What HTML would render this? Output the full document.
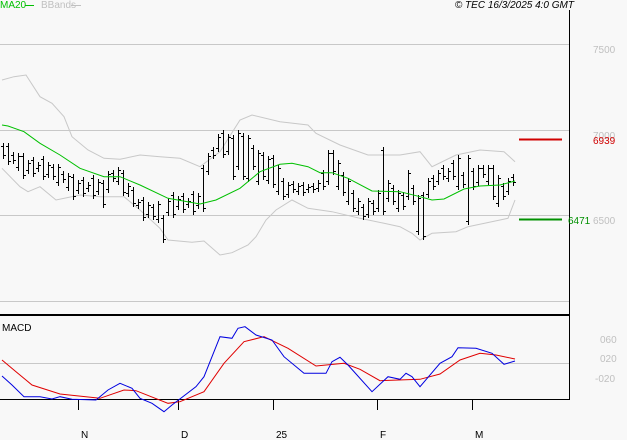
<!DOCTYPE html>
<html><head><meta charset="utf-8">
<style>
html,body{margin:0;padding:0;background:#f8f8f8;width:627px;height:440px;overflow:hidden}
svg{display:block}
text{font-family:"Liberation Sans",sans-serif;font-size:10px}
</style></head><body>
<svg width="627" height="440" viewBox="0 0 627 440" xmlns="http://www.w3.org/2000/svg">
<rect width="627" height="440" fill="#f8f8f8"/>
<g stroke="#c8c8c8" stroke-width="1" shape-rendering="crispEdges">
<line x1="0" y1="44.5" x2="569" y2="44.5"/>
<line x1="0" y1="130.5" x2="569" y2="130.5"/>
<line x1="0" y1="215.5" x2="569" y2="215.5"/>
<line x1="0" y1="301.5" x2="569" y2="301.5"/>
<line x1="0" y1="363.5" x2="569" y2="363.5"/>
</g>
<g shape-rendering="crispEdges">
<line x1="569.5" y1="10" x2="569.5" y2="400" stroke="#000"/>
<line x1="0" y1="315" x2="570" y2="315" stroke="#000" stroke-width="2"/>
<line x1="0" y1="399.5" x2="570" y2="399.5" stroke="#000"/>
<g stroke="#000">
<line x1="78.5" y1="399" x2="78.5" y2="410"/>
<line x1="178.5" y1="399" x2="178.5" y2="410"/>
<line x1="273.5" y1="399" x2="273.5" y2="410"/>
<line x1="377.5" y1="399" x2="377.5" y2="410"/>
<line x1="472.5" y1="399" x2="472.5" y2="410"/>
</g>
</g>
<g fill="#000">
<text x="81" y="438">N</text><text x="181" y="438">D</text><text x="276" y="438">25</text><text x="380" y="438">F</text><text x="475" y="438">M</text>
<text x="2" y="331" font-size="9">MACD</text>
<text x="574" y="8" text-anchor="end" font-style="italic">© TEC 16/3/2025 4:0 GMT</text>
</g>
<text x="0" y="8" fill="#00c000" font-size="9">MA20</text>
<line x1="25" y1="5.5" x2="34" y2="5.5" stroke="#00c000"/>
<text x="41" y="8" fill="#c0c0c0" font-size="9">BBands</text>
<line x1="71" y1="5.5" x2="81" y2="5.5" stroke="#c0c0c0"/>
<g fill="#c0c0c0">
<text x="593" y="53">7500</text>
<text x="593" y="139">7000</text>
<text x="593" y="224">6500</text>
<text x="600" y="343">060</text>
<text x="600" y="362">020</text>
<text x="595" y="382">-020</text>
</g>
<line x1="519" y1="139.5" x2="562" y2="139.5" stroke="#d00000" stroke-width="2"/>
<text x="593" y="144" fill="#d00000">6939</text>
<line x1="519" y1="219.5" x2="562" y2="219.5" stroke="#009000" stroke-width="2"/>
<text x="568" y="224" fill="#009000">6471</text>

<g fill="none" stroke-width="1">
<polyline stroke="#c8c8c8" points="2,80 14,76.7 26,75 40,96.7 52,103.3 64,116.7 72,136.7 88,150 104,158.3 120,159.3 140,155 160,156.7 180,158.3 200,166.7 220,151.7 240,120 252,115 280,121.7 308,125 316,133.3 340,145 368,155 400,155 420,151.7 432,166.7 456,155 480,150 504,151.7 515,161.7"/>
<polyline stroke="#c8c8c8" points="2,168.3 20,186.7 28,191.7 40,186.7 56,200 80,195 100,196.7 124,196.7 140,210 160,228.3 168,240 192,242.3 204,241 220,255 232,252.7 248,245 256,236.7 266,220 276,210 292,200 308,208.3 332,211.7 360,218.3 384,223.3 400,226.7 412,233.3 420,240 432,233.3 456,231.7 468,226.7 500,220 508,218.3 515,200"/>
<path stroke="#000" shape-rendering="crispEdges" d="
M3.5 143V159M1 146.5h2M4 155.5h2
M8.5 143V165M6 146.5h2M9 161.5h2
M13.5 152V164M11 155.5h2M14 160.5h2
M18.5 153V171M16 167.5h2M19 156.5h2
M23.5 153V179M21 156.5h2M24 175.5h2
M28.5 160V174M26 170.5h2M29 163.5h2
M33.5 157V177M31 160.5h2M34 173.5h2
M38.5 162V172M36 168.5h2M39 165.5h2
M43.5 156V180M41 159.5h2M44 176.5h2
M48.5 162V178M46 174.5h2M49 165.5h2
M53.5 164V180M51 167.5h2M54 176.5h2
M58.5 164V186M56 182.5h2M59 167.5h2
M63.5 171V183M61 174.5h2M64 179.5h2
M68.5 173V191M66 187.5h2M69 176.5h2
M73.5 174V200M71 177.5h2M74 196.5h2
M78.5 180V194M76 190.5h2M79 183.5h2
M83.5 177V197M81 180.5h2M84 193.5h2
M88.5 182V192M86 188.5h2M89 185.5h2
M93.5 175V199M91 178.5h2M94 195.5h2
M98.5 179V195M96 191.5h2M99 182.5h2
M103.5 180V208M101 183.5h2M104 204.5h2
M108.5 171V193M106 189.5h2M109 174.5h2
M113.5 170V182M111 173.5h2M114 178.5h2
M118.5 167V185M116 181.5h2M119 170.5h2
M123.5 170V196M121 173.5h2M124 192.5h2
M128.5 183V197M126 193.5h2M129 186.5h2
M133.5 187V207M131 190.5h2M134 203.5h2
M138.5 199V209M136 205.5h2M139 202.5h2
M143.5 197V221M141 200.5h2M144 217.5h2
M148.5 202V218M146 214.5h2M149 205.5h2
M153.5 204V220M151 207.5h2M154 216.5h2
M158.5 201V223M156 219.5h2M159 204.5h2
M163.5 215V243M161 218.5h2M164 239.5h2
M168.5 198V216M166 212.5h2M169 201.5h2
M173.5 192V218M171 195.5h2M174 214.5h2
M178.5 196V210M176 206.5h2M179 199.5h2
M183.5 193V213M181 196.5h2M184 209.5h2
M188.5 198V208M186 204.5h2M189 201.5h2
M193.5 191V215M191 194.5h2M194 211.5h2
M198.5 193V209M196 205.5h2M199 196.5h2
M203.5 165V212M201 168.5h2M204 208.5h2
M208.5 153V175M206 171.5h2M209 156.5h2
M213.5 147V159M211 150.5h2M214 155.5h2
M218.5 134V152M216 148.5h2M219 137.5h2
M223.5 130V158M221 133.5h2M224 154.5h2
M228.5 134V155M226 151.5h2M229 137.5h2
M233.5 135V180M231 138.5h2M234 176.5h2
M238.5 130V170M236 166.5h2M239 133.5h2
M243.5 133V180M241 136.5h2M244 176.5h2
M248.5 135V182M246 178.5h2M249 138.5h2
M253.5 145V170M251 148.5h2M254 166.5h2
M258.5 150V185M256 181.5h2M259 153.5h2
M263.5 152V180M261 155.5h2M264 176.5h2
M268.5 156V184M266 180.5h2M269 159.5h2
M273.5 155V188M271 158.5h2M274 184.5h2
M278.5 165V195M276 191.5h2M279 168.5h2
M283.5 178V200M281 181.5h2M284 196.5h2
M288.5 182V198M286 194.5h2M289 185.5h2
M293.5 181V193M291 184.5h2M294 189.5h2
M298.5 183V195M296 191.5h2M299 186.5h2
M303.5 182V196M301 185.5h2M304 192.5h2
M308.5 184V193M306 189.5h2M309 187.5h2
M313.5 183V193M311 186.5h2M314 189.5h2
M318.5 180V192M316 188.5h2M319 183.5h2
M323.5 170V190M321 173.5h2M324 186.5h2
M328.5 150V185M326 181.5h2M329 153.5h2
M333.5 150V175M331 153.5h2M334 171.5h2
M338.5 160V190M336 186.5h2M339 163.5h2
M343.5 172V196M341 175.5h2M344 192.5h2
M348.5 178V205M346 201.5h2M349 181.5h2
M353.5 190V212M351 193.5h2M354 208.5h2
M358.5 198V215M356 211.5h2M359 201.5h2
M363.5 204V220M361 207.5h2M364 216.5h2
M368.5 198V218M366 214.5h2M369 201.5h2
M373.5 200V215M371 203.5h2M374 211.5h2
M378.5 190V212M376 208.5h2M379 193.5h2
M383.5 147V215M381 150.5h2M384 211.5h2
M388.5 180V202M386 198.5h2M389 183.5h2
M393.5 185V205M391 188.5h2M394 201.5h2
M398.5 190V212M396 208.5h2M399 193.5h2
M403.5 192V210M401 195.5h2M404 206.5h2
M408.5 170V200M406 196.5h2M409 173.5h2
M413.5 185V205M411 188.5h2M414 201.5h2
M418.5 195V235M416 231.5h2M419 198.5h2
M423.5 192V240M421 195.5h2M424 236.5h2
M428.5 178V198M426 194.5h2M429 181.5h2
M433.5 175V190M431 178.5h2M434 186.5h2
M438.5 170V185M436 181.5h2M439 173.5h2
M443.5 165V180M441 168.5h2M444 176.5h2
M448.5 168V182M446 178.5h2M449 171.5h2
M453.5 160V180M451 163.5h2M454 176.5h2
M458.5 155V190M456 186.5h2M459 158.5h2
M463.5 172V188M461 175.5h2M464 184.5h2
M468.5 155V225M466 221.5h2M469 158.5h2
M473.5 168V190M471 171.5h2M474 186.5h2
M478.5 165V186M476 182.5h2M479 168.5h2
M483.5 165V178M481 168.5h2M484 174.5h2
M488.5 165V185M486 181.5h2M489 168.5h2
M493.5 165V200M491 168.5h2M494 196.5h2
M498.5 175V207M496 203.5h2M499 178.5h2
M503.5 183V200M501 186.5h2M504 196.5h2
M508.5 178V195M506 191.5h2M509 181.5h2
M513.5 174V186M511 177.5h2M514 182.5h2"/>
<polyline stroke="#00c000" points="2,125 8,126 24,131.7 40,143.3 60,155 80,168.3 104,176.7 120,176.7 140,185 168,198.3 200,204 216,200 240,188.3 260,171.7 280,164.3 292,163.3 308,166.7 320,172.7 332,172.7 348,178.3 372,191 400,191.7 420,196.7 432,200 444,199 464,189 480,186 500,185 515,181"/>
<polyline stroke="#e00000" points="2,360 16,371.7 32,385 60,394 100,398.3 124,390 136,390.7 168,403.3 180,401.7 204,391.7 224,363.3 244,341.7 264,336.7 288,348.3 316,366 344,363.3 360,369.3 380,380.7 420,379.3 440,374 460,360 480,353.3 496,355 515,359"/>
<polyline stroke="#0000e0" points="2,376 12,385 24,396.7 40,396.7 52,399 60,396.7 72,399.3 96,400 108,390 120,383.3 132,388.3 140,398.3 152,403.3 164,411.7 172,405 196,386.7 204,376.7 220,336.7 232,338.3 238,328.3 245,326.7 256,335 272,340 284,356.7 304,373.3 326,373.3 332,361.7 340,357.3 348,365 372,391.7 388,376.7 400,379.3 406,373.3 412,376.7 420,386.7 440,363.3 452,356.7 458,347.7 476,348.3 492,353.3 504,364.3 515,361"/>
</g>
</svg>
</body></html>
